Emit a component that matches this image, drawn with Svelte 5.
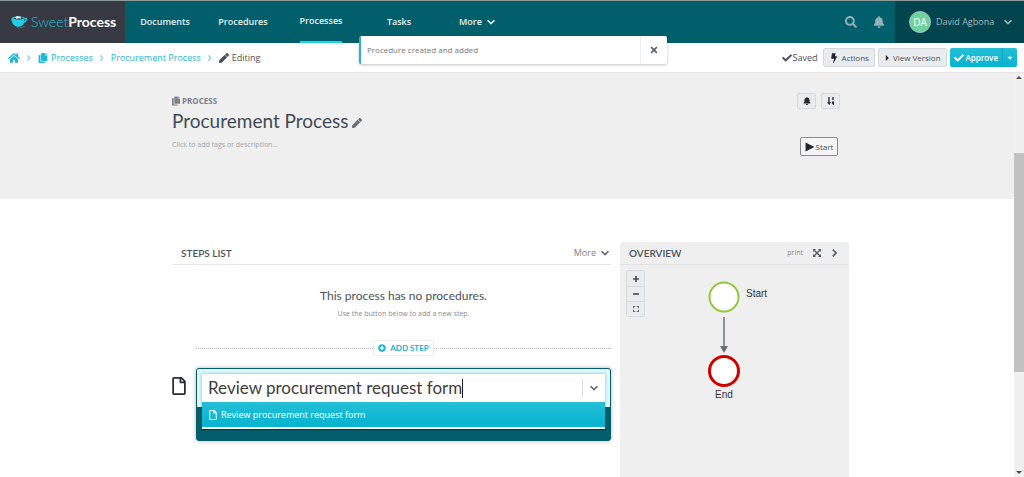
<script lang="ts">
  type Icon = { box: string; d: string };

  const icons: Record<string, Icon> = {
    check: {
      box: '0 0 512 512',
      d: 'M173.9 439.4L7.5 273c-10-10-10-26.200 0-36.200l36.200-36.200c10-10 26.200-10 36.200 0L192 312.700 432.100 72.600c10-10 26.200-10 36.200 0l36.200 36.200c10 10 10 26.200 0 36.200L210.100 439.400c-10 10-26.200 10-36.200 0z'
    },
    bell: {
      box: '0 0 448 512',
      d: 'M224 512c35.320 0 63.970-28.650 63.970-64H160.030c0 35.350 28.650 64 63.970 64zm215.390-149.710c-19.320-20.760-55.470-51.990-55.470-154.290 0-77.700-54.480-139.900-127.940-155.160V32c0-17.670-14.320-32-31.980-32s-31.980 14.330-31.980 32v20.840C118.560 68.100 64.080 130.300 64.080 208c0 102.300-36.150 133.530-55.470 154.290-6 6.450-8.660 14.160-8.610 21.710.11 16.400 12.980 32 32.100 32h383.800c19.120 0 32-15.600 32.100-32 .05-7.550-2.610-15.270-8.610-21.710z'
    },
    search: {
      box: '0 0 512 512',
      d: 'M505 442.700L405.300 343c-4.500-4.500-10.600-7-17-7H372c27.600-35.300 44-79.700 44-128C416 93.100 322.900 0 208 0S0 93.100 0 208s93.100 208 208 208c48.300 0 92.700-16.400 128-44v16.300c0 6.400 2.500 12.500 7 17l99.700 99.700c9.400 9.400 24.600 9.400 33.900 0l28.300-28.300c9.400-9.400 9.400-24.600.1-34zM208 336c-70.700 0-128-57.200-128-128 0-70.700 57.200-128 128-128 70.700 0 128 57.200 128 128 0 70.700-57.200 128-128 128z'
    },
    copy: {
      box: '0 0 448 512',
      d: 'M320 448v40c0 13-11 24-24 24H24c-13 0-24-11-24-24V120c0-13 11-24 24-24h72v296c0 31 25 56 56 56h168zm0-344V0H152c-13 0-24 11-24 24v368c0 13 11 24 24 24h272c13 0 24-11 24-24V128H344c-13 0-24-11-24-24zm121-31L375 7a24 24 0 0 0-17-7h-6v96h96v-6a24 24 0 0 0-7-17z'
    },
    pen: {
      box: '0 0 512 512',
      d: 'M290.740 93.240l128.020 128.020-277.990 277.990-114.140 12.600C11.350 513.540-1.560 500.620.14 485.340l12.700-114.220 277.900-277.880zm207.200-19.060l-60.110-60.110c-18.750-18.750-49.160-18.750-67.910 0l-56.550 56.550 128.020 128.020 56.550-56.550c18.750-18.760 18.750-49.160 0-67.910z'
    },
    home: {
      box: '0 0 576 512',
      d: 'M288 150L96 308v164c0 9 7 16 16 16h112c9 0 16-7 16-16v-96c0-9 7-16 16-16h64c9 0 16 7 16 16v96c0 9 7 16 16 16h112c9 0 16-7 16-16V308L288 150zm284 101l-84-69V44c0-7-5-12-12-12h-56c-7 0-12 5-12 12v72l-90-74c-17-14-43-14-60 0L4 251c-5 4-6 12-2 17l26 31c4 5 12 6 17 2L280 107c5-4 11-4 16 0l235 194c5 4 13 3 17-2l26-31c4-5 3-13-2-17z'
    },
    plus: {
      box: '0 0 512 512',
      d: 'M256 8C119 8 8 119 8 256s111 248 248 248 248-111 248-248S393 8 256 8zm144 276c0 7-5 12-12 12h-92v92c0 7-5 12-12 12h-56c-7 0-12-5-12-12v-92h-92c-7 0-12-5-12-12v-56c0-7 5-12 12-12h92v-92c0-7 5-12 12-12h56c7 0 12 5 12 12v92h92c7 0 12 5 12 12v56z'
    },
    bolt: { box: '0 0 320 512', d: 'M80 16h160l-32 150h92c14 0 22 14 15 26L150 500c-11 18-38 8-32-13l44-193H40c-15 0-26-13-24-27L56 34c2-10 12-18 24-18z' },
    file: { box: '0 0 384 512', d: 'M370 98L286 14A48 48 0 0 0 252 0H48C21 0 0 21 0 48v416c0 27 21 48 48 48h288c27 0 48-21 48-48V132c0-13-5-25-14-34zm-42 30h-72V56zM50 462V50h156v102c0 13 11 24 24 24h104v286z' },
    caret: { box: '0 0 10 10', d: 'M1 3h8L5 8z' },
    caretRight: { box: '0 0 10 10', d: 'M3 0l5 5-5 5z' },
    play: { box: '0 0 16 18', d: 'M0 1l16 8-16 8z' },
    down: { box: '0 0 14 14', d: 'M2 3l5 5 5-5 2 2-7 7-7-7z' },
    right: { box: '0 0 14 14', d: 'M4 0l7 7-7 7-2-2 5-5-5-5z' },
    close: { box: '0 0 14 14', d: 'M3 1l4 4 4-4 2 2-4 4 4 4-2 2-4-4-4 4-2-2 4-4-4-4z' },
    sort: { box: '0 0 18 18', d: 'M3 0h3v12h3l-4 6-5-6h3zM12 0h3v7h-3zM10 3l3-3v3zM11 10h5v8h-3v-3h-2z' },
    expand: { box: '0 0 16 16', d: 'M0 0h6L4 2l4 4 4-4-2-2h6v6l-2-2-4 4 4 4 2-2v6h-6l2-2-4-4-4 4 2 2H0v-6l2 2 4-4-4-4-2 2z' },
    fit: { box: '0 0 16 16', d: 'M0 0h6v2H2v4H0zM10 0h6v6h-2V2h-4zM0 10h2v4h4v2H0zM14 10h2v6h-6v-2h4z' },
    zoomIn: { box: '0 0 14 14', d: 'M5 0h4v5h5v4H9v5H5V9H0V5h5z' },
    zoomOut: { box: '0 0 14 14', d: 'M0 5h14v4H0z' }
  };

  const navItems = ['Documents', 'Procedures', 'Processes', 'Tasks', 'More'];
  const active = 'Processes';

  let query = $state('Review procurement request form');
  let toastOpen = $state(true);
  const options = ['Review procurement request form'];
</script>

{#snippet icon(name: string, size: string = 'sm')}
  <svg class="icon {size}" viewBox={icons[name].box} aria-hidden="true">
    <path d={icons[name].d} fill="currentColor" />
  </svg>
{/snippet}

<div class="app">
  <header class="topbar">
    <a class="logo" href="#home">
      <svg class="cup" viewBox="0 0 50 38" aria-hidden="true">
        <path d="M1 8C10 1 30 0 42 7c8-2 9 9-4 15-3 8-9 11-17 11C9 33 1 21 1 8z" fill="#22cce4" />
        <path d="M40 10c4-2 5 4-1 7z" fill="#373a43" />
        <path d="M7 8c7 5 24 5 31 0-8-4-23-4-31 0z" fill="#373a43" />
        <path d="M12 4l8-3 8 3 2 5-9-1-5 2z" fill="#eef6f8" />
        <path d="M17 36h14l10-4" stroke="#687079" stroke-width="2" fill="none" />
      </svg>
      <span class="brand">Sweet<b>Process</b></span>
    </a>
    <nav>
      {#each navItems as item}
        <a href="#{item.toLowerCase()}" class:active={item === active}>
          <span>{item}</span>
          {#if item === 'More'}{@render icon('down', 'xs')}{/if}
        </a>
      {/each}
    </nav>
    <div class="tools">
      <button aria-label="Search">{@render icon('search', 'md')}</button>
      <button aria-label="Notifications">{@render icon('bell', 'md')}</button>
    </div>
    <button class="user">
      <span class="avatar">DA</span>
      <span class="name">David Agbona</span>
      {@render icon('down', 'xs')}
    </button>
  </header>

  {#if toastOpen}
    <div class="toast" role="status">
      <span>Procedure created and added</span>
      <button aria-label="Dismiss" onclick={() => (toastOpen = false)}>{@render icon('close', 'xs')}</button>
    </div>
  {/if}

  <div class="crumbbar">
    <div class="crumbs">
      <a href="#home" aria-label="Home">{@render icon('home', 'md')}</a>
      <i>{@render icon('right', 'xxs')}</i>
      <a href="#processes">{@render icon('copy')} Processes</a>
      <i>{@render icon('right', 'xxs')}</i>
      <a href="#procurement">Procurement Process</a>
      <i>{@render icon('right', 'xxs')}</i>
      <span class="current">{@render icon('pen')} Editing</span>
    </div>
    <div class="actions">
      <span class="saved">{@render icon('check')} Saved</span>
      <button class="btn">{@render icon('bolt')} Actions</button>
      <button class="btn">{@render icon('caretRight', 'xxs')} View Version</button>
      <div class="approve">
        <button>{@render icon('check')} Approve</button>
        <button class="split" aria-label="More approve options">{@render icon('caret', 'xxs')}</button>
      </div>
    </div>
  </div>

  <div class="viewport">
    <div class="page">
      <section class="hero">
        <div>
          <div class="kind">{@render icon('copy')} PROCESS</div>
          <h1>Procurement Process {@render icon('pen')}</h1>
          <p>Click to add tags or description...</p>
        </div>
        <div class="hero-side">
          <div class="pair">
            <button class="btn mini" aria-label="Notify">{@render icon('bell')}</button>
            <button class="btn mini" aria-label="Sort">{@render icon('sort')}</button>
          </div>
          <button class="start">{@render icon('play')} Start</button>
        </div>
      </section>

      <main>
        <section class="steps">
          <div class="head">
            <h2>STEPS LIST</h2>
            <button class="more">More {@render icon('down', 'xs')}</button>
          </div>
          <div class="empty">
            <h3>This process has no procedures.</h3>
            <p>Use the button below to add a new step.</p>
          </div>
          <div class="divider">
            <button>{@render icon('plus', 'xs')} ADD STEP</button>
          </div>
          <div class="new-step">
            {@render icon('file', 'lg')}
            <div class="editor">
              <div class="field-wrap">
                <div class="field">
                  <input type="text" aria-label="Procedure title" bind:value={query} />
                  <span class="cursor"></span>
                  <button class="toggle" aria-label="Toggle options">{@render icon('down', 'xs')}</button>
                </div>
                <div class="menu">
                  {#each options as option}
                    <button onclick={() => (query = option)}>{@render icon('file')} {option}</button>
                  {/each}
                </div>
              </div>
            </div>
          </div>
        </section>

        <aside class="overview">
          <div class="head">
            <h2>OVERVIEW</h2>
            <div class="links">
              <a href="#print">print</a>
              <button aria-label="Expand">{@render icon('expand', 'xs')}</button>
              <button aria-label="Collapse">{@render icon('right', 'xs')}</button>
            </div>
          </div>
          <div class="canvas">
            <div class="zoom">
              <button aria-label="Zoom in">{@render icon('zoomIn', 'xxs')}</button>
              <button aria-label="Zoom out">{@render icon('zoomOut', 'xxs')}</button>
              <button aria-label="Fit to screen">{@render icon('fit', 'xxs')}</button>
            </div>
            <svg class="flow" width="110" height="150" viewBox="0 0 110 150">
              <circle cx="35" cy="32" r="14.5" fill="#fff" stroke="#95c93d" stroke-width="2" />
              <path d="M35 52v32" stroke="#8b9494" stroke-width="2" />
              <path d="M31 81h8l-4 7z" fill="#667272" />
              <circle cx="35" cy="106" r="14.5" fill="#fff" stroke="#cf0000" stroke-width="3" />
              <text x="57" y="32">Start</text>
              <text x="35" y="133" text-anchor="middle">End</text>
            </svg>
          </div>
        </aside>
      </main>
    </div>
    <div class="scroll" aria-hidden="true">
      <span class="arrow up"></span>
      <span class="thumb"></span>
      <span class="arrow"></span>
    </div>
  </div>
</div>

<style>
  :global(body) {
    background: #fff;
  }

  .app {
    position: relative;
    display: flex;
    flex-direction: column;
    height: 100vh;
    overflow: hidden;
    font-family: 'Open Sans', 'Noto Sans', sans-serif;
    font-size: 9px;
    line-height: 14px;
    color: #4a515a;
  }

  .app * {
    box-sizing: border-box;
  }

  button {
    font: inherit;
    color: inherit;
    background: none;
    border: 0;
    padding: 0;
    cursor: pointer;
  }

  a {
    color: #1fb6cf;
    text-decoration: none;
  }

  h1, h2, h3, p {
    margin: 0;
  }

  h1, h2, h3 {
    font-family: Lato, sans-serif;
  }

  .icon {
    flex: none;
    display: block;
  }

  .xxs {
    width: 6px;
    height: 6px;
  }

  .xs {
    width: 8px;
    height: 8px;
  }

  .sm {
    width: 10px;
    height: 10px;
  }

  .md {
    width: 12px;
    height: 12px;
  }

  .lg {
    width: 14px;
    height: 18px;
  }

  .topbar {
    display: flex;
    flex: none;
    height: 43px;
    border-top: 1px solid #8b9a9c;
    background: #005f6b;
    color: #e3f0f1;
  }

  .logo {
    display: flex;
    align-items: center;
    gap: 3px;
    width: 125px;
    padding-left: 11px;
    background: #373a43;
    color: #22bdd4;
  }

  .cup {
    width: 17px;
    height: 14px;
  }

  .brand {
    font-family: Lato, sans-serif;
    font-size: 14px;
    font-weight: 300;
    line-height: 18px;
  }

  .brand b {
    font-weight: 700;
    color: #fff;
  }

  nav {
    display: grid;
    grid-template-columns: repeat(5, 78px);
    flex: 1;
    padding-left: 1px;
  }

  nav a {
    display: flex;
    align-items: center;
    justify-content: center;
    gap: 5px;
    color: #e3f0f1;
    font-weight: 600;
  }

  nav .active span {
    align-self: stretch;
    padding-top: 13px;
    border-bottom: 2px solid #1fd3ea;
  }

  .tools {
    display: flex;
    align-items: center;
    gap: 16px;
    padding-right: 10px;
    color: #8fb3b9;
  }

  .user {
    display: flex;
    align-items: center;
    width: 129px;
    padding: 0 12px 0 14px;
    background: #01444d;
    color: #a3babd;
  }

  .avatar {
    width: 22px;
    height: 22px;
    border: 1px solid #9fc9b8;
    border-radius: 50%;
    background: #70d1a0;
    color: #fff;
    font-size: 10px;
    line-height: 20px;
    text-align: center;
  }

  .name {
    flex: 1;
    padding-left: 5px;
    text-align: left;
  }

  .toast {
    position: absolute;
    z-index: 2;
    top: 36px;
    left: 50%;
    display: flex;
    width: 308px;
    height: 28px;
    margin-left: -153px;
    border-left: 2px solid #2fb1c4;
    border-radius: 2px;
    background: #fff;
    box-shadow: 0 1px 3px rgba(0, 0, 0, 0.25);
    color: #70777e;
    font-size: 8px;
  }

  .toast span {
    flex: 1;
    padding: 7px 6px;
  }

  .toast button {
    display: grid;
    place-items: center;
    width: 27px;
    border-left: 1px solid #eee;
    color: #59626a;
  }

  .crumbbar {
    display: flex;
    flex: none;
    align-items: center;
    justify-content: space-between;
    height: 30px;
    padding: 0 7px 0 8px;
    border-bottom: 1px solid #e4e4e4;
    background: #fff;
  }

  .crumbs, .crumbs a, .current, .actions, .saved, .btn, .approve, .approve button, .kind, .start, .more, .links {
    display: flex;
    align-items: center;
  }

  .crumbs {
    gap: 6px;
  }

  .crumbs a, .current {
    gap: 3px;
  }

  .crumbs i {
    color: #8ccad5;
  }

  .actions {
    gap: 3px;
  }

  .saved {
    gap: 1px;
    padding-right: 2px;
  }

  .btn {
    gap: 3px;
    height: 19px;
    padding: 0 5px;
    border: 1px solid #d3d9dd;
    border-radius: 2px;
    background: #e9ecee;
    font-size: 8px;
  }

  .btn .icon, .start .icon {
    color: #20272d;
  }

  .approve {
    height: 19px;
    border-radius: 2px;
    background: linear-gradient(#24bfd6, #04b3d0);
    color: #fff;
    font-size: 8px;
    font-weight: 600;
  }

  .approve button {
    gap: 2px;
    height: 19px;
    padding: 0 4px;
  }

  .approve .split {
    border-left: 1px solid #14a7bf;
  }

  .viewport {
    display: flex;
    flex: 1;
    min-height: 0;
  }

  .page {
    display: flex;
    flex: 1;
    flex-direction: column;
  }

  .hero {
    display: flex;
    justify-content: space-between;
    height: 126px;
    padding: 20px 174px 0 172px;
    background: #efefef;
  }

  .kind {
    gap: 2px;
    height: 16px;
    color: #7b838b;
    font-size: 8px;
    font-weight: 700;
  }

  .kind .icon {
    width: 8px;
  }

  h1 {
    display: flex;
    align-items: center;
    gap: 4px;
    font-size: 19px;
    font-weight: 400;
    line-height: 24px;
    color: #424b55;
  }

  h1 .icon {
    margin-top: 4px;
    color: #666e76;
  }

  .hero p {
    padding-top: 5px;
    color: #a0a5aa;
    font-size: 7px;
  }

  .hero-side {
    display: flex;
    flex-direction: column;
    align-items: flex-end;
    gap: 28px;
  }

  .pair {
    display: flex;
    gap: 5px;
  }

  .mini {
    justify-content: center;
    width: 19px;
    height: 16px;
    padding: 0;
  }

  .mini .icon {
    width: 8px;
    height: 8px;
  }

  .start {
    justify-content: center;
    gap: 1px;
    width: 38px;
    height: 19px;
    margin-right: 2px;
    border: 1px solid #858b90;
    border-radius: 2px;
    background: #f5f5f5;
    font-size: 8px;
  }

  main {
    display: grid;
    grid-template-columns: 439fr 229fr;
    gap: 9px;
    flex: 1;
    padding: 43px 165px 0 172px;
  }

  .head {
    display: flex;
    align-items: center;
    justify-content: space-between;
    height: 23px;
    padding: 0 2px 0 9px;
    border-bottom: 1px solid #e6e6e6;
  }

  h2 {
    font-size: 10px;
    font-weight: 600;
    color: #4c545d;
  }

  .more {
    gap: 5px;
    color: #7b828a;
  }

  .more .icon {
    color: #5b636b;
  }

  .empty {
    padding: 22px 0 0 24px;
    text-align: center;
  }

  h3 {
    font-size: 12px;
    font-weight: 400;
    line-height: 18px;
  }

  .empty p {
    padding-top: 2px;
    color: #868c92;
    font-size: 7px;
  }

  .divider {
    display: flex;
    align-items: center;
    margin: 19px 0 12px 24px;
  }

  .divider::before, .divider::after {
    content: '';
    flex: 1;
    border-top: 1px dotted #b4b8ba;
  }

  .divider button {
    display: flex;
    align-items: center;
    gap: 4px;
    height: 16px;
    padding: 0 4px;
    border: 1px solid #eee;
    border-radius: 2px;
    color: #13b5ce;
    font-family: Lato, sans-serif;
    font-size: 8px;
    font-weight: 700;
  }

  .new-step {
    display: flex;
    gap: 10px;
  }

  .new-step > .icon {
    margin-top: 9px;
    color: #272d33;
  }

  .editor {
    flex: 1;
    height: 73px;
    border: 1px solid #005f6b;
    border-radius: 3px;
    background: #005f6b;
    box-shadow: 0 0 4px rgba(0, 0, 0, 0.3);
  }

  .field-wrap {
    position: relative;
    padding: 5px;
    background: #e4f6f8;
    border-radius: 2px 2px 0 0;
  }

  .field {
    display: flex;
    align-items: center;
    height: 28px;
    padding-left: 6px;
    background: #fff;
    box-shadow: 0 0 2px 1px #8ee4f0;
  }

  input {
    field-sizing: content;
    padding: 0;
    border: 0;
    outline: 0;
    background: none;
    font: 400 17px/24px Lato, sans-serif;
    color: #3d3d3d;
  }

  .cursor {
    width: 1px;
    height: 19px;
    background: #222;
  }

  .toggle {
    display: grid;
    place-items: center;
    width: 23px;
    height: 18px;
    margin-left: auto;
    border-left: 1px solid #ddd;
    color: #666;
  }

  .menu {
    position: absolute;
    z-index: 1;
    top: 33px;
    left: 5px;
    right: 5px;
    padding-bottom: 2px;
    background: #fff;
    box-shadow: 0 1px 1px #1b2e3c;
  }

  .menu button {
    display: flex;
    align-items: center;
    gap: 3px;
    width: 100%;
    height: 25px;
    padding-left: 6px;
    background: linear-gradient(#24bfd6, #04b3d0);
    color: #fff;
  }

  .overview {
    display: flex;
    flex-direction: column;
    border-radius: 3px 3px 0 0;
    background: #efefef;
  }

  .overview .head {
    padding-right: 10px;
    border-color: #e0e2e3;
  }

  .links {
    gap: 10px;
    color: #59616a;
  }

  .links a {
    color: #838a90;
    font-size: 7px;
  }

  .canvas {
    display: grid;
    grid-template-columns: 19px 1fr;
    align-items: start;
    padding: 5px 6px;
  }

  .zoom {
    border: 1px solid #d5dce0;
    border-radius: 2px;
    background: #e8ecef;
  }

  .zoom button {
    display: grid;
    place-items: center;
    width: 100%;
    height: 15px;
  }

  .zoom button + button {
    border-top: 1px solid #d5dce0;
  }

  .flow {
    margin-left: 44px;
    margin-top: -5px;
  }

  .flow text {
    font: 10px 'Liberation Sans', sans-serif;
    fill: #333;
  }

  .scroll {
    display: flex;
    flex-direction: column;
    align-items: center;
    width: 10px;
    padding: 3px 0;
    background: #f0f0f0;
  }

  .arrow {
    border: 3px solid transparent;
    border-bottom: 0;
    border-top: 3px solid #505050;
  }

  .arrow.up {
    border-top: 0;
    border-bottom: 3px solid #505050;
  }

  .thumb {
    width: 10px;
    height: 55%;
    margin: 74px 0 auto;
    background: #c1c1c1;
  }
</style>
